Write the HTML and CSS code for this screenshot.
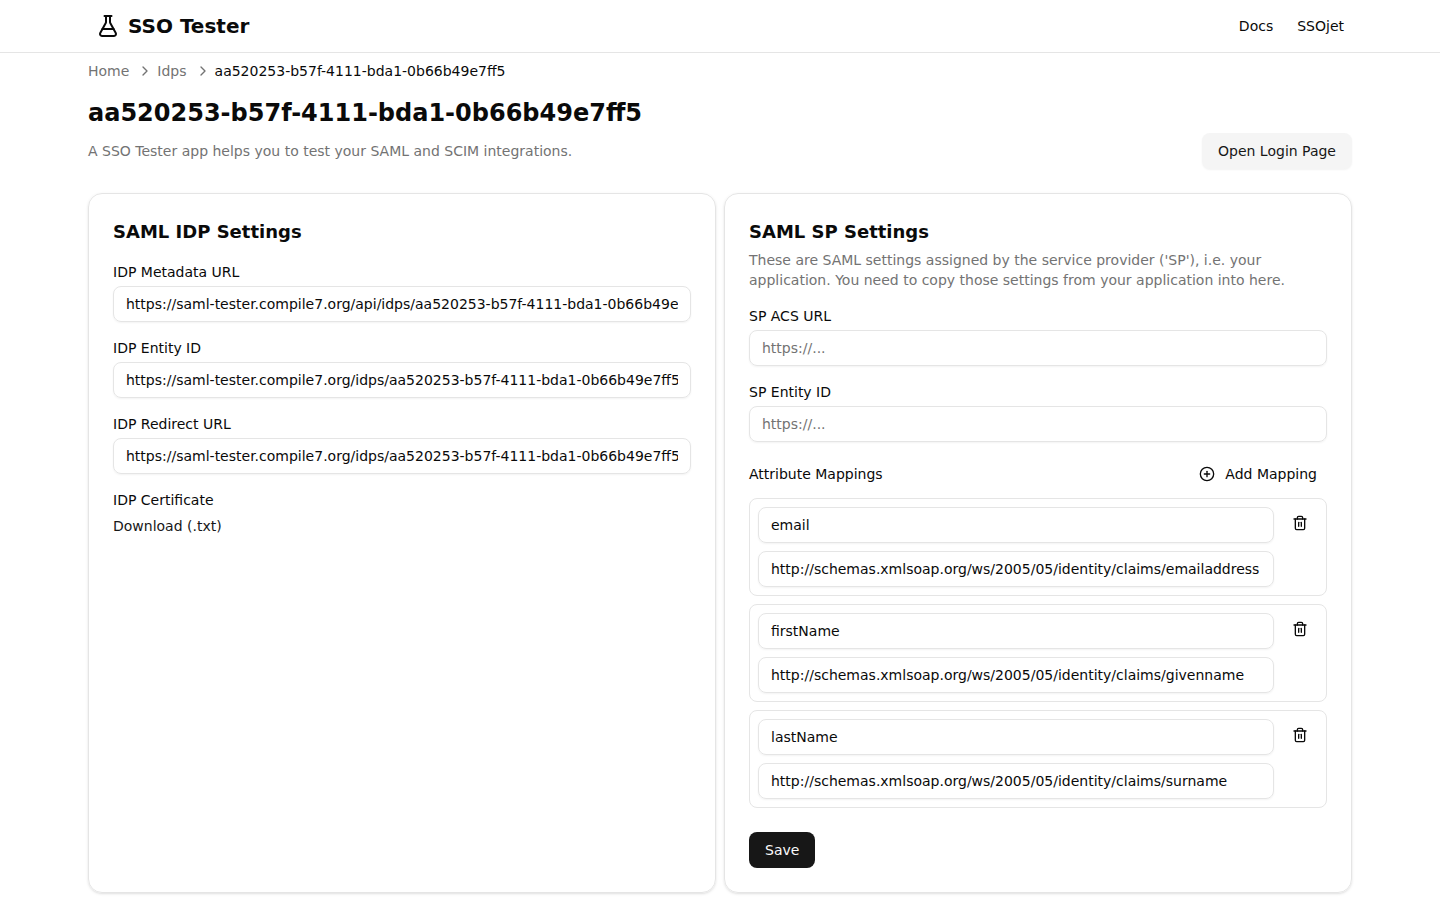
FILE: index.html
```html
<!DOCTYPE html>
<html lang="en">
<head>
    <meta charset="UTF-8">
    <meta name="viewport" content="width=device-width, initial-scale=1.0">
    <title>SSO Tester</title>
    <link rel="stylesheet" href="styles.css">
</head>
<body>

<!-- shared icons -->
<svg class="sprite" aria-hidden="true">
    <symbol id="chevron" viewBox="0 0 24 24"><path d="m9 18 6-6-6-6"/></symbol>
    <symbol id="trash" viewBox="0 0 24 24">
        <path d="M3 6h18"/>
        <path d="M19 6v14c0 1-1 2-2 2H7c-1 0-2-1-2-2V6"/>
        <path d="M8 6V4c0-1 1-2 2-2h4c1 0 2 1 2 2v2"/>
        <path d="M10 11v6"/>
        <path d="M14 11v6"/>
    </symbol>
</svg>

<header class="header">
    <div class="container header_inner">
        <a href="#" class="logo">
            <svg class="icon logo_icon" viewBox="0 0 24 24">
                <path d="M14 2v6a2 2 0 0 0 .245.96l5.51 10.08A2 2 0 0 1 18 22H6a2 2 0 0 1-1.755-2.96l5.51-10.08A2 2 0 0 0 10 8V2"/>
                <path d="M6.453 15h11.094"/>
                <path d="M8.5 2h7"/>
            </svg>
            SSO Tester
        </a>
        <nav class="nav">
            <a href="#">Docs</a>
            <a href="#">SSOjet</a>
        </nav>
    </div>
</header>

<main class="container main">
    <nav class="breadcrumb" aria-label="Breadcrumb">
        <a href="#">Home</a>
        <svg class="icon"><use href="#chevron"/></svg>
        <a href="#">Idps</a>
        <svg class="icon"><use href="#chevron"/></svg>
        <span class="current">aa520253-b57f-4111-bda1-0b66b49e7ff5</span>
    </nav>

    <h1 class="title">aa520253-b57f-4111-bda1-0b66b49e7ff5</h1>
    <div class="intro">
        <p class="muted">A SSO Tester app helps you to test your SAML and SCIM integrations.</p>
        <button type="button" class="btn btn_secondary">Open Login Page</button>
    </div>

    <div class="cards">
        <section class="card">
            <h2 class="card_title">SAML IDP Settings</h2>
            <div class="fields">
                <div class="field">
                    <label for="metadata">IDP Metadata URL</label>
                    <input type="text" class="input" id="metadata" readonly value="https://saml-tester.compile7.org/api/idps/aa520253-b57f-4111-bda1-0b66b49e7ff5/metadata">
                </div>
                <div class="field">
                    <label for="idp_entity">IDP Entity ID</label>
                    <input type="text" class="input" id="idp_entity" readonly value="https://saml-tester.compile7.org/idps/aa520253-b57f-4111-bda1-0b66b49e7ff5">
                </div>
                <div class="field">
                    <label for="redirect">IDP Redirect URL</label>
                    <input type="text" class="input" id="redirect" readonly value="https://saml-tester.compile7.org/idps/aa520253-b57f-4111-bda1-0b66b49e7ff5/sso">
                </div>
                <div class="field">
                    <span>IDP Certificate</span>
                    <a href="#" class="download">Download (.txt)</a>
                </div>
            </div>
        </section>

        <section class="card">
            <h2 class="card_title">SAML SP Settings</h2>
            <p class="muted card_text">These are SAML settings assigned by the service provider ('SP'), i.e. your application. You need to copy those settings from your application into here.</p>
            <form class="fields">
                <div class="field">
                    <label for="acs">SP ACS URL</label>
                    <input type="text" class="input" id="acs" placeholder="https://...">
                </div>
                <div class="field">
                    <label for="sp_entity">SP Entity ID</label>
                    <input type="text" class="input" id="sp_entity" placeholder="https://...">
                </div>
                <div class="mappings">
                    <div class="mappings_head">
                        <span>Attribute Mappings</span>
                        <button type="button" class="btn btn_add">
                            <svg class="icon" viewBox="0 0 24 24">
                                <circle cx="12" cy="12" r="10"/>
                                <path d="M8 12h8"/>
                                <path d="M12 8v8"/>
                            </svg>
                            Add Mapping
                        </button>
                    </div>
                    <div class="mapping">
                        <div class="mapping_inputs">
                            <input type="text" class="input" aria-label="Attribute name" value="email">
                            <input type="text" class="input" aria-label="Claim" value="http://schemas.xmlsoap.org/ws/2005/05/identity/claims/emailaddress">
                        </div>
                        <button type="button" class="btn btn_delete" aria-label="Delete mapping"><svg class="icon"><use href="#trash"/></svg></button>
                    </div>
                    <div class="mapping">
                        <div class="mapping_inputs">
                            <input type="text" class="input" aria-label="Attribute name" value="firstName">
                            <input type="text" class="input" aria-label="Claim" value="http://schemas.xmlsoap.org/ws/2005/05/identity/claims/givenname">
                        </div>
                        <button type="button" class="btn btn_delete" aria-label="Delete mapping"><svg class="icon"><use href="#trash"/></svg></button>
                    </div>
                    <div class="mapping">
                        <div class="mapping_inputs">
                            <input type="text" class="input" aria-label="Attribute name" value="lastName">
                            <input type="text" class="input" aria-label="Claim" value="http://schemas.xmlsoap.org/ws/2005/05/identity/claims/surname">
                        </div>
                        <button type="button" class="btn btn_delete" aria-label="Delete mapping"><svg class="icon"><use href="#trash"/></svg></button>
                    </div>
                </div>
                <button type="submit" class="btn btn_primary">Save</button>
            </form>
        </section>
    </div>
</main>

</body>
</html>
```
FILE: styles.css
```css
* {
    box-sizing: border-box;
    margin: 0;
    padding: 0;
}
body {
    font-family: "DejaVu Sans", sans-serif;
    font-size: 14px;
    line-height: 20px;
    color: #0a0a0a;
    background-color: #fff;
}
a {
    color: inherit;
    text-decoration: none;
}
.sprite {
    display: none;
}
.icon {
    width: 16px;
    height: 16px;
    flex-shrink: 0;
    fill: none;
    stroke: currentColor;
    stroke-width: 2;
    stroke-linecap: round;
    stroke-linejoin: round;
}
.container {
    max-width: 1280px;
    margin: 0 auto;
    padding: 0 8px;
}

/* header */
.header {
    border-bottom: 1px solid #e5e5e5;
}
.header_inner {
    display: flex;
    justify-content: space-between;
    align-items: center;
    padding: 12px 16px;
}
.logo {
    display: flex;
    align-items: center;
    gap: 8px;
    font-size: 20px;
    line-height: 28px;
    font-weight: bold;
}
.logo_icon {
    width: 24px;
    height: 24px;
}
.nav {
    display: flex;
    gap: 24px;
}

/* page heading */
.main {
    padding-top: 8px;
    padding-bottom: 8px;
}
.breadcrumb {
    display: flex;
    align-items: center;
    gap: 4px;
    color: #737373;
}
.breadcrumb .icon {
    margin-left: 4px;
}
.current {
    color: #0a0a0a;
}
.title {
    margin-top: 16px;
    font-size: 24px;
    line-height: 32px;
}
.muted {
    color: #737373;
}
.intro {
    display: flex;
    justify-content: space-between;
    align-items: center;
    margin: 4px 0 24px;
}

/* buttons */
.btn {
    display: inline-flex;
    align-items: center;
    justify-content: center;
    height: 36px;
    padding: 0 16px;
    border: none;
    border-radius: 8px;
    background: none;
    font: inherit;
    color: inherit;
    cursor: pointer;
}
.btn_secondary {
    background-color: #f5f5f5;
    color: #171717;
    box-shadow: 0 1px 2px rgba(0, 0, 0, 0.05);
}
.btn_primary {
    align-self: flex-start;
    margin-top: 8px;
    background-color: #171717;
    color: #fafafa;
}
.btn_add {
    height: 32px;
    padding: 0 10px;
    gap: 10px;
}
.btn_delete {
    width: 36px;
    height: 32px;
    padding: 0;
}

/* cards */
.cards {
    display: grid;
    grid-template-columns: 1fr 1fr;
    gap: 8px;
}
.card {
    padding: 24px;
    border: 1px solid #e5e5e5;
    border-radius: 14px;
    box-shadow: 0 1px 3px rgba(0, 0, 0, 0.1), 0 1px 2px -1px rgba(0, 0, 0, 0.1);
}
.card_title {
    font-size: 18px;
    line-height: 28px;
}
.card_text {
    margin-top: 4px;
}
.fields {
    display: flex;
    flex-direction: column;
    gap: 16px;
    margin-top: 16px;
}
.field {
    display: flex;
    flex-direction: column;
    gap: 4px;
}
.input {
    width: 100%;
    height: 36px;
    padding: 4px 12px;
    border: 1px solid #e5e5e5;
    border-radius: 8px;
    background: none;
    box-shadow: 0 1px 2px rgba(0, 0, 0, 0.05);
    font: inherit;
    color: inherit;
}
.input::placeholder {
    color: #737373;
}
.download {
    align-self: flex-start;
    line-height: 24px;
    color: #171717;
}

/* attribute mappings */
.mappings {
    display: flex;
    flex-direction: column;
    gap: 8px;
}
.mappings_head {
    display: flex;
    justify-content: space-between;
    align-items: center;
}
.mapping {
    display: flex;
    align-items: flex-start;
    gap: 8px;
    padding: 8px;
    border: 1px solid #e5e5e5;
    border-radius: 8px;
}
.mapping_inputs {
    display: flex;
    flex: 1;
    flex-direction: column;
    gap: 8px;
}
```
